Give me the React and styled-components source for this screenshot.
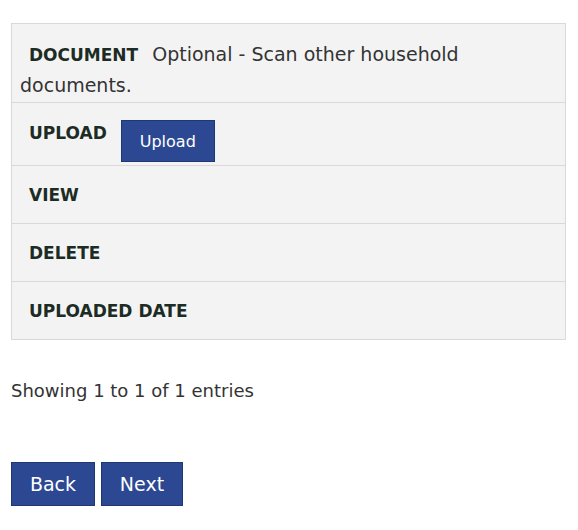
import React from "react";
import styled, { createGlobalStyle } from "styled-components";

const GlobalStyle = createGlobalStyle`
  body {
    margin: 0;
    background: #ffffff;
    font-family: "DejaVu Sans", "Liberation Sans", sans-serif;
    color: #333333;
  }
`;

const Page = styled.div`
  padding: 23px 12px 0 11px;
`;

const Table = styled.div`
  border: 1px solid #d9d9d9;
  background: #f3f3f3;
`;

const Row = styled.div`
  display: flex;
  align-items: flex-start;
  padding: ${props => props.pad || "14px 20px 13px 8px"};
  border-top: 1px solid #d9d9d9;
  font-size: 18px;
  line-height: 30px;
`;

const TextRow = styled.div`
  padding: 15px 20px 2px 8px;
  font-size: 19px;
  line-height: 30px;
  color: #333333;
`;

const Label = styled.span`
  font-weight: 700;
  color: #1c2c24;
  margin-left: 9px;
  margin-right: 14px;
  font-size: 17px;
`;

const Button = styled.button`
  font-family: "DejaVu Sans", "Liberation Sans", sans-serif;
  background: #2c4893;
  color: #ffffff;
  border: 1px solid #1f3677;
  border-radius: 0;
  cursor: pointer;
  padding: 0;
  width: ${props => props.w}px;
  height: ${props => props.h}px;
  font-size: ${props => props.fs}px;
  margin-top: ${props => props.mt || 0}px;
`;

const Info = styled.div`
  margin-top: 40px;
  font-size: 18px;
  color: #333333;
`;

const Actions = styled.div`
  display: flex;
  gap: 6px;
  margin-top: 61px;
`;

const App = () => (
  <>
    <GlobalStyle />
    <Page>
      <Table>
        <TextRow>
          <Label>DOCUMENT</Label>Optional - Scan other household documents.
        </TextRow>
        <Row pad="15px 20px 3px 8px">
          <Label>UPLOAD</Label>
          <Button w={94} h={42} fs={16} mt={2}>
            Upload
          </Button>
        </Row>
        <Row>
          <Label>VIEW</Label>
        </Row>
        <Row>
          <Label>DELETE</Label>
        </Row>
        <Row>
          <Label>UPLOADED DATE</Label>
        </Row>
      </Table>
      <Info>Showing 1 to 1 of 1 entries</Info>
      <Actions>
        <Button w={84} h={44} fs={19}>
          Back
        </Button>
        <Button w={82} h={44} fs={19}>
          Next
        </Button>
      </Actions>
    </Page>
  </>
);

export default App;
